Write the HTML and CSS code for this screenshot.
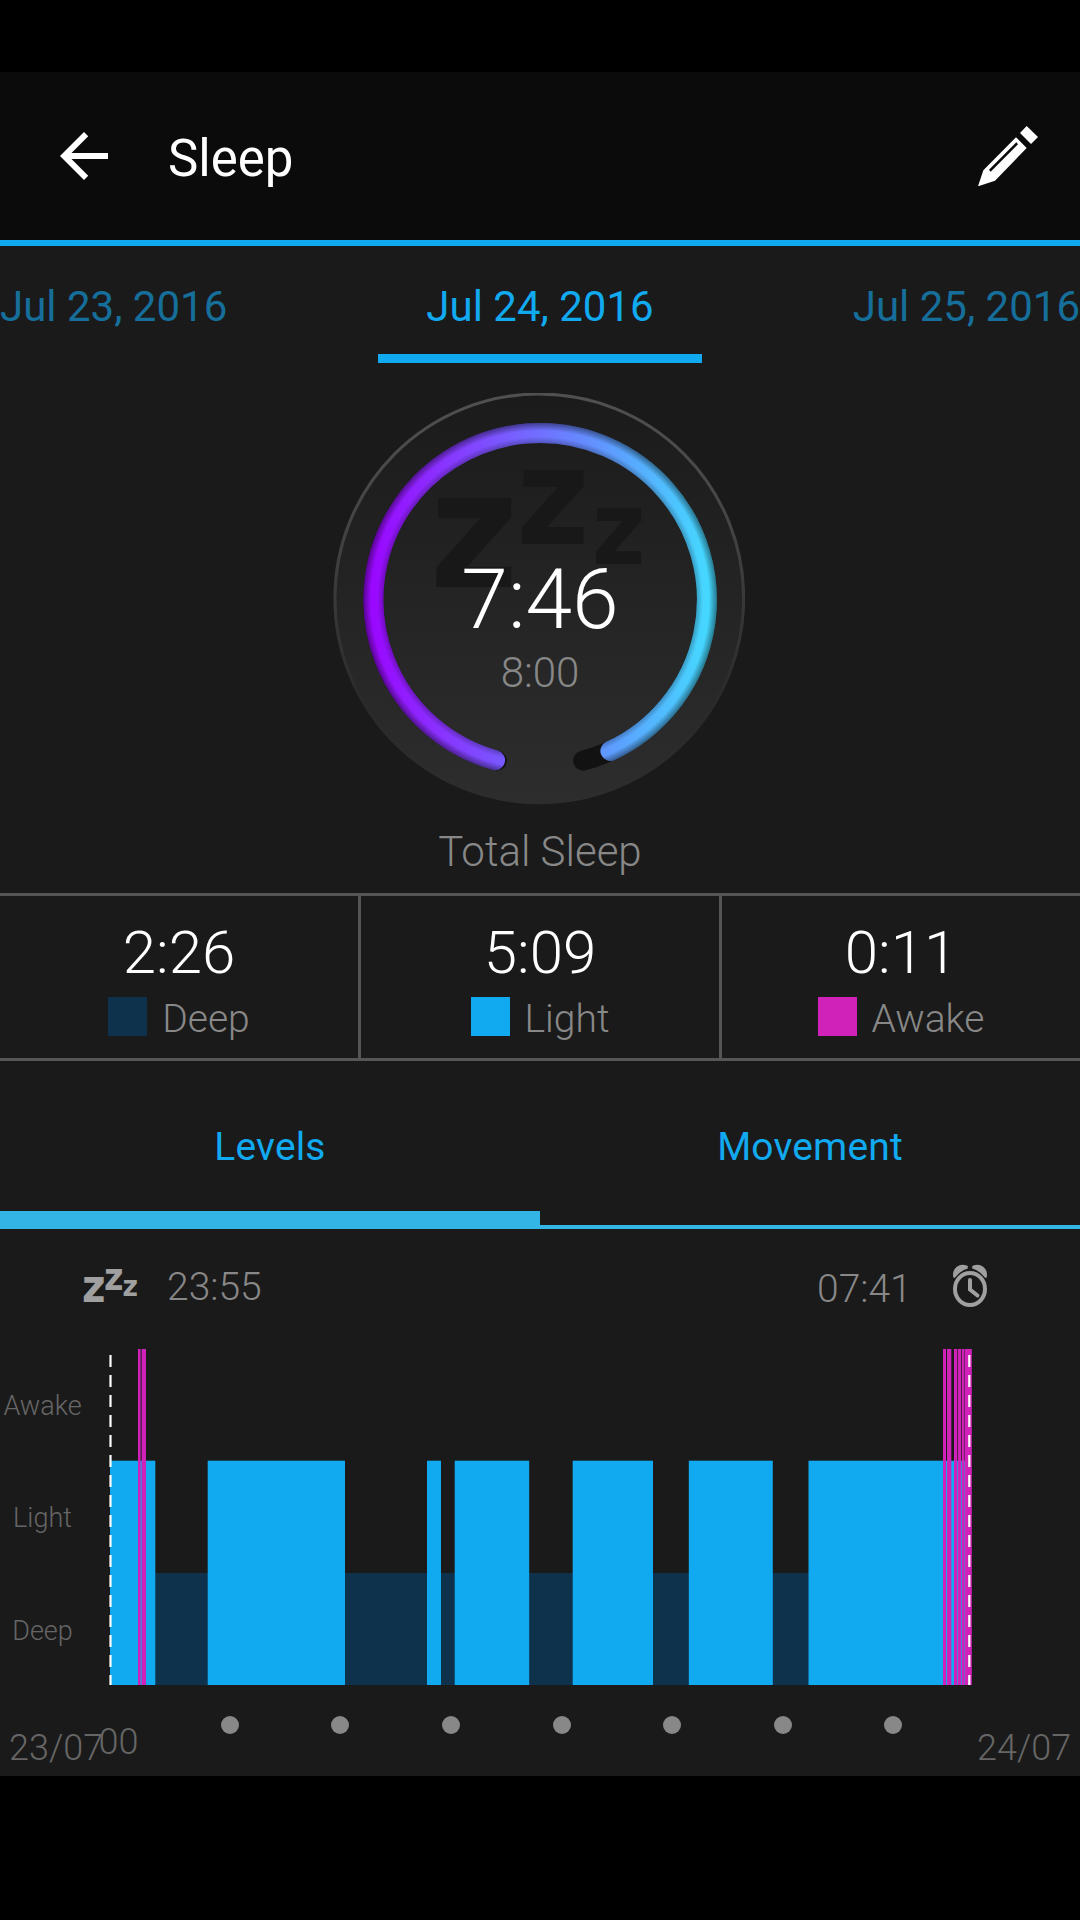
FILE: index.html
```html
<!DOCTYPE html>
<html lang="en">
  <head>
    <meta charset="UTF-8" />
    <meta name="viewport" content="width=device-width, initial-scale=1.0" />
    <title>Sleep</title>
    <link rel="stylesheet" href="styles.css">
  </head>
  <body>
    <div class="app">
      <header class="header">
        <svg class="back" viewBox="0 0 24 24">
          <path d="M20 11H7.83l5.59-5.59L12 4l-8 8 8 8 1.41-1.41L7.83 13H20v-2z" />
        </svg>
        <h1>Sleep</h1>
        <svg class="edit" viewBox="54 47 180 180">
          <path d="M200 47L234 80L213 101L180 68Z" />
          <path fill-rule="evenodd" d="M168 81L200 113L105 211L54 228L70 180ZM169 96L87 178L92 184L174 102Z" />
        </svg>
      </header>

      <nav class="dates">
        <a class="date">Jul 23, 2016</a>
        <a class="date active">Jul 24, 2016</a>
        <a class="date">Jul 25, 2016</a>
      </nav>

      <section class="total">
        <svg class="gauge" width="412" height="412" viewBox="333 393 412 412">
          <defs>
            <linearGradient id="face" x1="0" y1="0" x2="0" y2="1">
              <stop offset="0" stop-color="#1b1b1b" />
              <stop offset="1" stop-color="#2d2d2d" />
            </linearGradient>
            <linearGradient id="rim" x1="0" y1="0" x2="0" y2="1">
              <stop offset="0" stop-color="#505050" />
              <stop offset="0.3" stop-color="#454545" />
              <stop offset="0.75" stop-color="#2a2a2a" />
              <stop offset="1" stop-color="#2d2d2d" />
            </linearGradient>
            <linearGradient id="progress" gradientUnits="userSpaceOnUse" x1="373" y1="0" x2="707" y2="0">
              <stop offset="0" stop-color="#9a08ff" />
              <stop offset="0.5" stop-color="#7070ff" />
              <stop offset="1" stop-color="#45d8ff" />
            </linearGradient>
            <radialGradient id="shade" gradientUnits="userSpaceOnUse" cx="540" cy="599.7" r="177">
              <stop offset="0.885" stop-color="#000" stop-opacity="0.25" />
              <stop offset="0.92" stop-color="#000" stop-opacity="0" />
              <stop offset="0.955" stop-color="#000" stop-opacity="0" />
              <stop offset="1" stop-color="#000" stop-opacity="0.45" />
            </radialGradient>
          </defs>
          <circle cx="539.3" cy="598.4" r="204.4" fill="url(#face)" stroke="url(#rim)" stroke-width="3" />
          <g class="zzz">
            <text x="429.5" y="586.7" font-size="162" textLength="89" lengthAdjust="spacingAndGlyphs">z</text>
            <text x="516" y="544" font-size="135" textLength="73.5" lengthAdjust="spacingAndGlyphs">z</text>
            <text x="592" y="563.5" font-size="101" textLength="53.5" lengthAdjust="spacingAndGlyphs">z</text>
          </g>
          <g class="ring">
            <path d="M496.9 760.7A166.7 166.7 0 1 1 583.1 760.7" stroke="#121212" />
            <path d="M495 760.2A166.7 166.7 0 1 1 610.4 750.9" stroke="url(#progress)" />
            <path d="M495 760.2A166.7 166.7 0 1 1 610.4 750.9" stroke="url(#shade)" />
          </g>
          <text class="actual" x="540" y="628">7:46</text>
          <text class="goal" x="540" y="686.5">8:00</text>
        </svg>
        <p>Total Sleep</p>
      </section>

      <section class="stats">
        <div class="stat">
          <div class="time">2:26</div>
          <div class="legend"><span class="swatch deep"></span><span class="name">Deep</span></div>
        </div>
        <div class="stat">
          <div class="time">5:09</div>
          <div class="legend"><span class="swatch light"></span><span class="name">Light</span></div>
        </div>
        <div class="stat">
          <div class="time">0:11</div>
          <div class="legend"><span class="swatch awake"></span><span class="name">Awake</span></div>
        </div>
      </section>

      <nav class="tabs">
        <a class="tab active">Levels</a>
        <a class="tab">Movement</a>
      </nav>

      <!-- sleep levels over the night -->
      <svg class="chart" width="1080" height="547" viewBox="0 1229 1080 547">
        <g class="icon-z">
          <text x="82" y="1302" font-size="46" textLength="23.5" lengthAdjust="spacingAndGlyphs">z</text>
          <text x="104" y="1290" font-size="38" textLength="19.5" lengthAdjust="spacingAndGlyphs">z</text>
          <text x="122.5" y="1295.5" font-size="29" textLength="15.5" lengthAdjust="spacingAndGlyphs">z</text>
        </g>
        <text class="clock-time" x="167" y="1300">23:55</text>
        <text class="clock-time" x="817" y="1302">07:41</text>
        <g class="alarm">
          <ellipse cx="970" cy="1289" rx="15" ry="16" />
          <path d="M970 1280V1289.5L977.5 1295.5" stroke-linecap="round" />
          <path class="bell" d="M954 1277C952.5 1268 960 1263.5 967 1266.5V1268Q960 1270 954.5 1277Z" />
          <path class="bell" d="M986 1277C987.5 1268 980 1263.5 973 1266.5V1268Q980 1270 985.5 1277Z" />
        </g>

        <g class="axis">
          <text x="42.5" y="1415">Awake</text>
          <text x="42.5" y="1527">Light</text>
          <text x="42.5" y="1640">Deep</text>
        </g>

        <g class="fill-deep">
          <rect x="155" y="1573" width="654" height="112" />
        </g>
        <g class="fill-light">
          <rect x="110" y="1460.7" width="45.3" height="224.3" />
          <rect x="207.7" y="1460.7" width="137.3" height="224.3" />
          <rect x="427" y="1460.7" width="14" height="224.3" />
          <rect x="454.7" y="1460.7" width="74.5" height="224.3" />
          <rect x="572.7" y="1460.7" width="80.3" height="224.3" />
          <rect x="688.8" y="1460.7" width="84" height="224.3" />
          <rect x="808.5" y="1460.7" width="160" height="224.3" />
        </g>
        <g class="fill-awake">
          <rect x="138" y="1349" width="8" height="336" opacity="0.4" />
          <rect x="138" y="1349" width="2.3" height="336" />
          <rect x="142" y="1349" width="4" height="336" />
          <rect x="943" y="1349" width="3" height="336" />
          <rect x="947" y="1349" width="4.3" height="336" />
          <rect x="954" y="1349" width="3" height="336" />
          <rect x="958" y="1349" width="3" height="336" />
          <rect x="962" y="1349" width="2.3" height="336" />
          <rect x="965" y="1349" width="6.8" height="336" />
          <rect x="954" y="1349" width="17" height="336" opacity="0.3" />
        </g>
        <path class="limit" d="M110.5 1355V1685M969.3 1355V1685" />

        <g class="dots">
          <circle cx="230" cy="1725" r="9" />
          <circle cx="340" cy="1725" r="9" />
          <circle cx="451" cy="1725" r="9" />
          <circle cx="562" cy="1725" r="9" />
          <circle cx="672" cy="1725" r="9" />
          <circle cx="783" cy="1725" r="9" />
          <circle cx="893" cy="1725" r="9" />
        </g>
        <g class="day">
          <text x="9" y="1760">23/07</text>
          <text x="98.5" y="1754">00</text>
          <text x="977" y="1760">24/07</text>
        </g>
      </svg>
    </div>
  </body>
</html>
```
FILE: styles.css
```css
* {
  box-sizing: border-box;
}

body {
  margin: 0;
  padding: 72px 0 144px;
  background: #000;
  font-family: Roboto, sans-serif;
}

.app {
  width: 1080px;
  height: 1704px;
  background: #1a1a1a;
  overflow: hidden;
}

.header {
  display: flex;
  align-items: center;
  height: 174px;
  padding: 0 42px 0 48px;
  background: #0b0b0b;
  border-bottom: 6px solid #11a9ef;
}

.back {
  width: 72px;
  height: 72px;
  fill: #fff;
}

.edit {
  width: 60px;
  height: 60px;
  margin-left: auto;
  fill: #fff;
}

h1 {
  margin: 5px 0 0 48px;
  color: #fff;
  font-size: 51px;
  font-weight: 400;
}

.dates {
  display: flex;
  justify-content: space-between;
  height: 117px;
}

.date {
  width: 324px;
  padding-top: 36px;
  color: #166f9a;
  font-size: 42px;
  line-height: 49px;
}

.date:last-child {
  text-align: right;
}

.date.active {
  color: #11a9ef;
  text-align: center;
  border-bottom: 9px solid #11a9ef;
}

.total {
  height: 530px;
  padding-top: 30px;
  text-align: center;
}

.gauge {
  display: block;
  margin-left: 333px;
}

.gauge .zzz {
  fill: #181818;
}

.zzz,
.icon-z {
  font-family: "DejaVu Sans", sans-serif;
  font-weight: 700;
}

.ring {
  fill: none;
  stroke-width: 20;
  stroke-linecap: round;
}

.actual,
.goal {
  font-weight: 300;
  text-anchor: middle;
}

.actual {
  fill: #fff;
  font-size: 84px;
}

.goal {
  fill: #888;
  font-size: 42px;
}

.total p {
  margin: 22px 0 0;
  color: #888;
  font-size: 42px;
  font-weight: 300;
  line-height: 49px;
}

.stats {
  display: grid;
  grid-template-columns: repeat(3, 1fr);
  gap: 3px;
  height: 168px;
  background: #555;
  border-top: 3px solid #555;
  border-bottom: 3px solid #555;
}

.stat {
  background: #1a1a1a;
  text-align: center;
  font-weight: 300;
}

.time {
  padding-top: 21px;
  color: #fff;
  font-size: 60px;
  line-height: 72px;
}

.legend {
  display: flex;
  justify-content: center;
  align-items: center;
  gap: 15px;
  height: 46px;
  margin-top: 4px;
  color: #888;
  font-size: 39px;
}

.name {
  padding-top: 5px;
}

.swatch {
  width: 39px;
  height: 39px;
}

.deep {
  background: #0e324c;
}

.light {
  background: #11a9ef;
}

.awake {
  background: #d022b8;
}

.tabs {
  display: flex;
  align-items: flex-end;
  height: 168px;
}

.tab {
  flex: 1;
  height: 168px;
  border-bottom: 4px solid #33b5e5;
  color: #11a9ef;
  font-size: 39px;
  letter-spacing: 0.15px;
  line-height: 172px;
  text-align: center;
}

.tab.active {
  border-bottom-width: 18px;
}

.chart {
  display: block;
}

.icon-z {
  fill: #a0a0a0;
}

.chart text {
  font-weight: 300;
}

.chart .icon-z text {
  font-weight: 700;
}

.clock-time {
  fill: #888;
  font-size: 39px;
}

.alarm {
  fill: none;
  stroke: #a0a0a0;
  stroke-width: 4;
}

.alarm .bell {
  fill: #a0a0a0;
  stroke-width: 1.5;
}

.axis {
  fill: #666;
  font-size: 27px;
  text-anchor: middle;
}

.fill-deep {
  fill: #0e324c;
}

.fill-light {
  fill: #11a9ef;
}

.fill-awake {
  fill: #d022b8;
}

.limit {
  stroke: #fff;
  stroke-width: 2.2;
  stroke-dasharray: 12 8;
}

.dots {
  fill: #888;
}

.day {
  fill: #666;
  font-size: 36px;
}
```
